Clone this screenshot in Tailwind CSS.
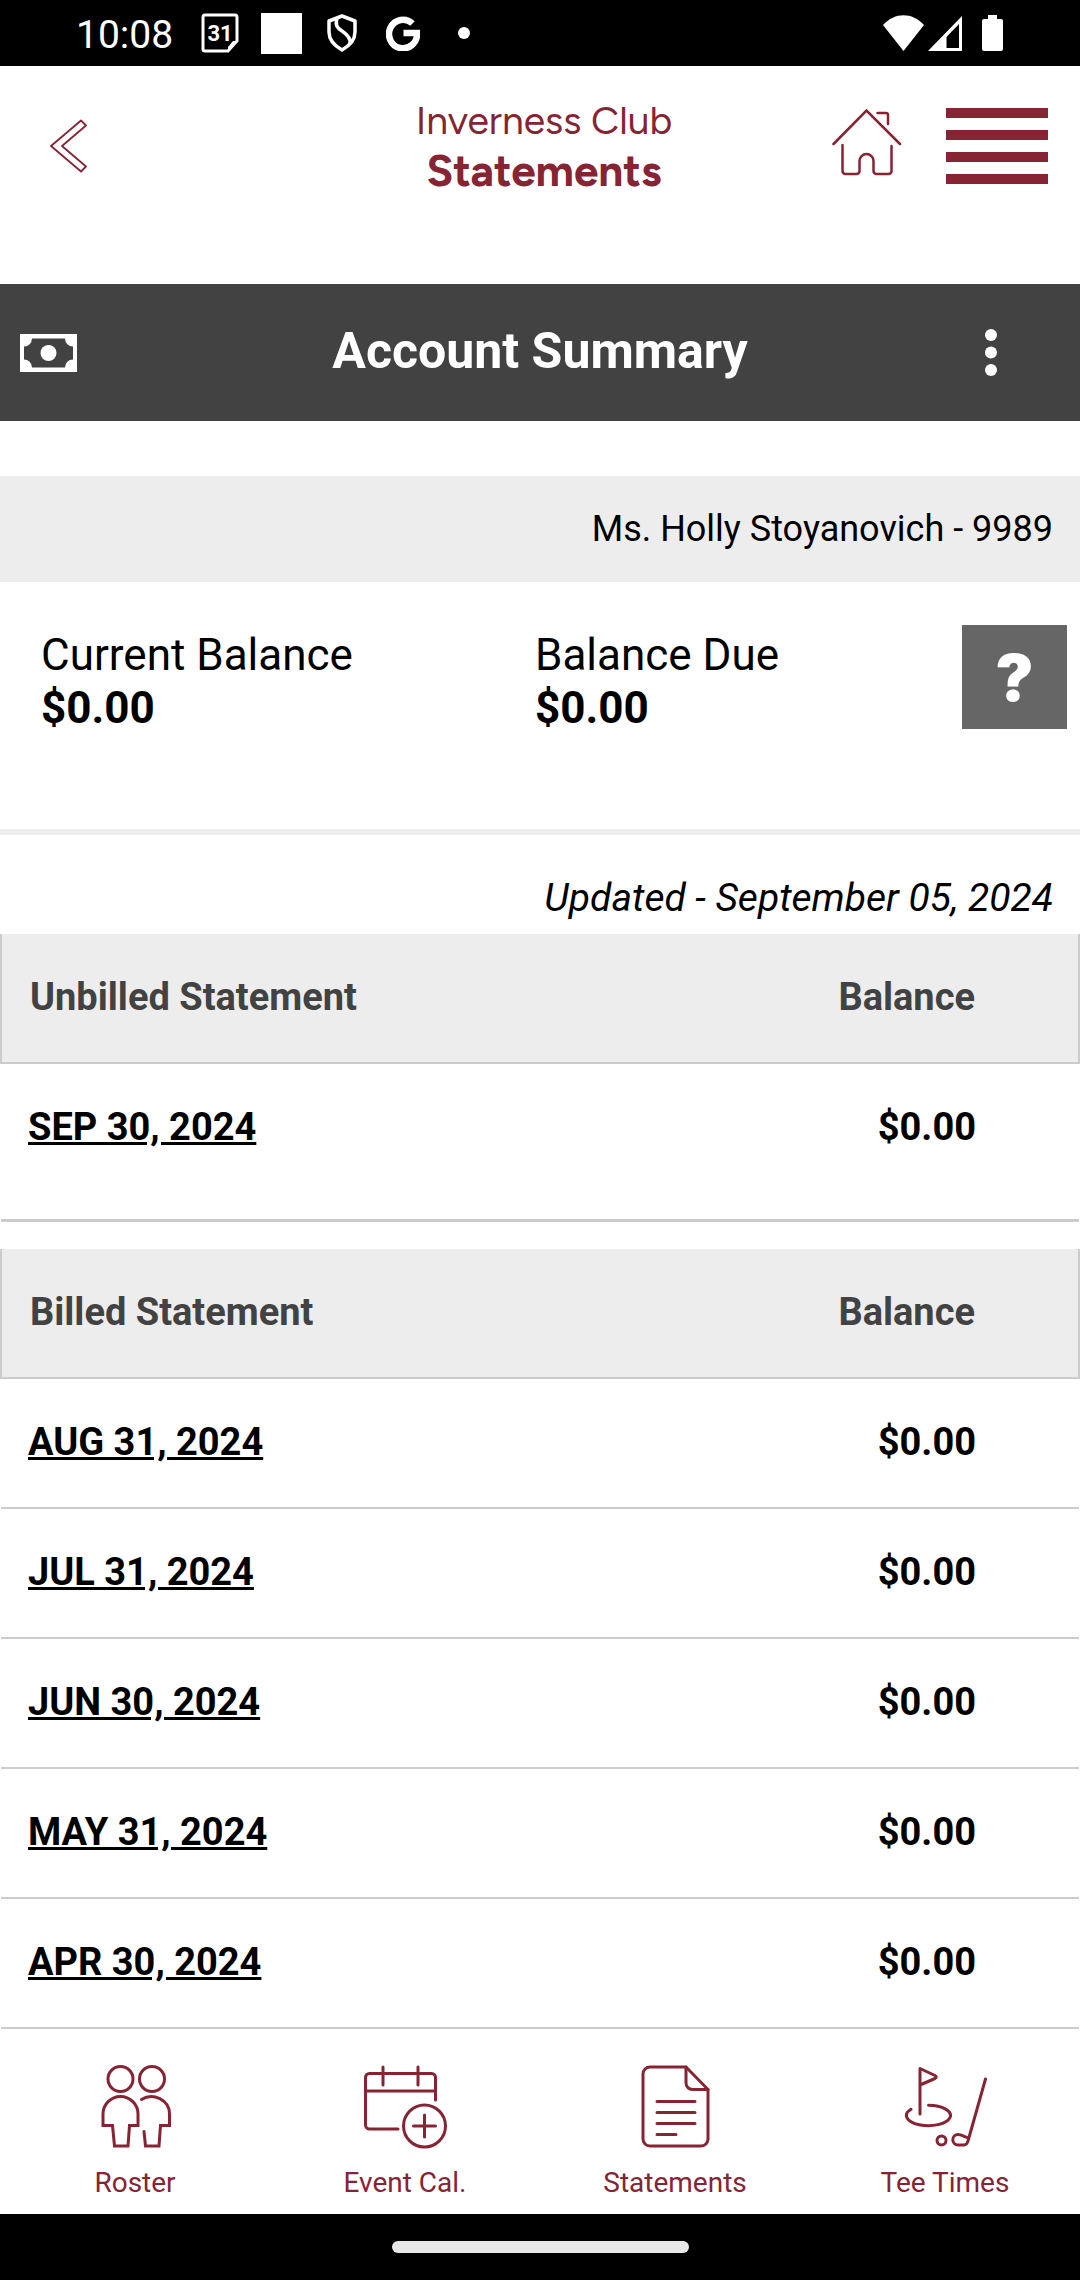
<!DOCTYPE html>
<html lang="en">
<head>
    <meta charset="UTF-8">
    <meta name="viewport" content="width=device-width, initial-scale=1.0">
    <title>Inverness Club - Statements</title>
    <script src="https://cdn.jsdelivr.net/npm/@tailwindcss/browser@4"></script>
</head>
<body class="min-h-screen flex flex-col bg-white text-black font-['Roboto',sans-serif]">

    <!-- Status bar -->
    <div class="h-[66px] bg-black text-white flex items-center justify-between pl-[76px] pr-[77px]">
        <div class="flex items-center">
            <span class="pt-1 text-[39px] leading-[48px]">10:08</span>
            <svg class="ml-7 w-[38px] h-[40px]" viewBox="0 0 38 40" fill="none" stroke="currentColor" stroke-width="3">
                <path d="M4 2h30a2 2 0 0 1 2 2v24l-9 10H4a2 2 0 0 1-2-2V4a2 2 0 0 1 2-2z"/>
                <path d="M36 28l-9 10v-4l5-6z" fill="currentColor" stroke="none"/>
                <text x="19" y="28" text-anchor="middle" font-family="Roboto, sans-serif" font-size="22" font-weight="700" fill="currentColor" stroke="none">31</text>
            </svg>
            <span class="ml-[22px] w-[41px] h-[41px] bg-white"></span>
            <svg class="ml-6 w-8 h-[38px]" viewBox="0 0 32 38" fill="none" stroke="currentColor" stroke-width="3.5" stroke-linejoin="round">
                <path d="M16 2l13 5v11c0 8-6 14-13 18C9 32 3 26 3 18V7z"/>
                <path d="M11 4c-2 7 0 10 5 13 6 4 9 8 8 13"/>
            </svg>
            <svg class="ml-7 w-[34px] h-[36px]" viewBox="0 0 34 36" fill="none" stroke="currentColor" stroke-width="6.5">
                <path d="M26.5 8.5A14 14.3 0 1 0 31 18H17.500"/>
            </svg>
            <span class="ml-[38px] w-3 h-3 rounded-full bg-white"></span>
        </div>
        <div class="flex items-center">
            <svg class="w-[41px] h-[36px]" viewBox="0 0 41 36" fill="currentColor"><path d="M20.500 36L0 10C12-3 29-3 41 10z"/></svg>
            <svg class="ml-1 w-[34px] h-[36px]" viewBox="0 0 34 36" fill="currentColor"><path fill-rule="evenodd" d="M34 1v35H0zM31 9L18.500 22v11H31z"/></svg>
            <svg class="ml-5 w-[21px] h-[36px]" viewBox="0 0 21 36" fill="currentColor"><path d="M6 0h9v4h4a2 2 0 0 1 2 2v28a2 2 0 0 1-2 2H2a2 2 0 0 1-2-2V6a2 2 0 0 1 2-2h4z"/></svg>
        </div>
    </div>

    <!-- Header -->
    <header class="grid grid-cols-[1fr_auto_1fr] items-center pt-[30px] pb-[88px] pl-10 pr-8 text-[#862434]">
        <button type="button" aria-label="Back" class="justify-self-start p-2.5">
            <svg class="w-[38px] h-[54px]" viewBox="0 0 38 54" fill="none" stroke="currentColor" stroke-width="1.8" stroke-linejoin="round"><path d="M31 1.500L1 27l30 25.500 5-5L12 27 36 6.500z"/></svg>
        </button>
        <h1 class="text-center leading-[50px] font-['Figtree','Lato',sans-serif]">
            <span class="block text-[39px]">Inverness Club</span>
            <span class="block text-[44px] font-bold">Statements</span>
        </h1>
        <div class="justify-self-end flex items-center gap-11">
            <a href="#home" aria-label="Home" class="pb-2">
                <svg class="w-[70px] h-[68px]" viewBox="0 0 70 68" fill="none" stroke="currentColor" stroke-width="2.500" stroke-linecap="round">
                    <path d="M1.500 36L34.500 2.500 68 36M45.500 5H54a2 2 0 0 1 2 2v9"/>
                    <path d="M10.500 37v26a3 3 0 0 0 3 3h11a3 3 0 0 0 3-3V53a7 7 0 0 1 14 0v10a3 3 0 0 0 3 3h12a3 3 0 0 0 3-3V38"/>
                </svg>
            </a>
            <button type="button" aria-label="Menu" class="w-[102px] flex flex-col gap-3">
                <span class="w-full h-2.5 bg-[#862434]"></span>
                <span class="w-full h-2.5 bg-[#862434]"></span>
                <span class="w-full h-2.5 bg-[#862434]"></span>
                <span class="w-full h-2.5 bg-[#862434]"></span>
            </button>
        </div>
    </header>

    <!-- Account bar -->
    <div class="grid grid-cols-[1fr_auto_1fr] items-center h-[137px] px-5 bg-[#424242] text-white">
        <svg class="w-[57px] h-[38px]" viewBox="0 0 57 38" fill="currentColor">
            <path fill-rule="evenodd" d="M0 0h57v38H0zM12 4.500a8 8 0 0 1-8 8v13a8 8 0 0 1 8 8h33a8 8 0 0 1 8-8v-13a8 8 0 0 1-8-8z"/>
            <circle cx="28.500" cy="19" r="8"/>
        </svg>
        <h2 class="pb-1 text-[50px] leading-[60px] font-bold">Account Summary</h2>
        <button type="button" aria-label="More options" class="justify-self-end mr-[63px]">
            <svg class="w-3 h-[47px]" viewBox="0 0 12 47" fill="currentColor"><circle cx="6" cy="6" r="6"/><circle cx="6" cy="23.500" r="6"/><circle cx="6" cy="41" r="6"/></svg>
        </button>
    </div>

    <main class="grow">
        <p class="mt-[55px] h-[106px] px-[27px] flex items-center justify-end bg-[#ededed] text-[36px]">Ms. Holly Stoyanovich - 9989</p>

        <!-- Balances -->
        <section class="flex items-start pt-[43px] pb-[94px] pl-[41px] pr-[13px] border-b-6 border-[#ededed] text-[44px] leading-[53px]">
            <dl class="grow grid grid-cols-[494px_1fr] pt-1">
                <div>
                    <dt>Current Balance</dt>
                    <dd class="font-bold">$0.00</dd>
                </div>
                <div>
                    <dt>Balance Due</dt>
                    <dd class="font-bold">$0.00</dd>
                </div>
            </dl>
            <button type="button" aria-label="Help" class="w-[105px] h-[104px] bg-[#666] text-white text-[64px] font-black font-['Inter',sans-serif]">?</button>
        </section>

        <p class="pt-[38px] pb-[11px] px-[27px] text-right text-[39px] leading-[50px] italic">Updated - September 05, 2024</p>

        <!-- Unbilled statements -->
        <table class="w-full text-[38px] leading-[46px] font-bold">
            <thead class="bg-[#ededed] text-[#424242] border-x-2 border-b-2 border-[#ccc]">
                <tr>
                    <th class="pt-10 pb-[42px] pl-7 text-left">Unbilled Statement</th>
                    <th class="pt-10 pb-[42px] pr-[103px] text-right">Balance</th>
                </tr>
            </thead>
            <tbody>
                <tr class="border-b-3 border-[#ccc]">
                    <td class="pt-10 pb-[69px] pl-[27px]"><a href="#sep-30-2024" class="underline">SEP 30, 2024</a></td>
                    <td class="pt-10 pb-[69px] pr-[103px] text-right">$0.00</td>
                </tr>
            </tbody>
        </table>

        <!-- Billed statements -->
        <table class="mt-[27px] w-full text-[38px] leading-[46px] font-bold">
            <thead class="bg-[#ededed] text-[#424242] border-x-2 border-b-2 border-[#ccc]">
                <tr>
                    <th class="pt-10 pb-[42px] pl-7 text-left">Billed Statement</th>
                    <th class="pt-10 pb-[42px] pr-[103px] text-right">Balance</th>
                </tr>
            </thead>
            <tbody>
                <tr class="border-b-2 border-[#ccc]">
                    <td class="pt-10 pb-[42px] pl-[27px]"><a href="#aug-31-2024" class="underline">AUG 31, 2024</a></td>
                    <td class="pt-10 pb-[42px] pr-[103px] text-right">$0.00</td>
                </tr>
                <tr class="border-b-2 border-[#ccc]">
                    <td class="pt-10 pb-[42px] pl-[27px]"><a href="#jul-31-2024" class="underline">JUL 31, 2024</a></td>
                    <td class="pt-10 pb-[42px] pr-[103px] text-right">$0.00</td>
                </tr>
                <tr class="border-b-2 border-[#ccc]">
                    <td class="pt-10 pb-[42px] pl-[27px]"><a href="#jun-30-2024" class="underline">JUN 30, 2024</a></td>
                    <td class="pt-10 pb-[42px] pr-[103px] text-right">$0.00</td>
                </tr>
                <tr class="border-b-2 border-[#ccc]">
                    <td class="pt-10 pb-[42px] pl-[27px]"><a href="#may-31-2024" class="underline">MAY 31, 2024</a></td>
                    <td class="pt-10 pb-[42px] pr-[103px] text-right">$0.00</td>
                </tr>
                <tr class="border-b-2 border-[#ccc]">
                    <td class="pt-10 pb-[42px] pl-[27px]"><a href="#apr-30-2024" class="underline">APR 30, 2024</a></td>
                    <td class="pt-10 pb-[42px] pr-[103px] text-right">$0.00</td>
                </tr>
            </tbody>
        </table>
    </main>

    <!-- Bottom navigation -->
    <nav class="grid grid-cols-4 pt-9 pb-[14px] text-[#862434] text-[28px] leading-[34px]">
        <a href="#roster" class="flex flex-col items-center gap-[17px]">
            <svg class="w-[84px] h-[84px]" viewBox="0 0 84 84" fill="none" stroke="currentColor" stroke-width="3" stroke-linecap="round">
                <circle cx="27.500" cy="14" r="12.500"/>
                <circle cx="59" cy="14" r="12.500"/>
                <path d="M10 60.500V49a17.500 17.500 0 0 1 35 0v11.500h-8.500L35 81H21.500l-2-20.500z"/>
                <path d="M48.500 34.500C60 27 76.500 35 76.500 49v11.500h-9L66 81H52.500L51 66.500"/>
            </svg>
            <span>Roster</span>
        </a>
        <a href="#events" class="flex flex-col items-center gap-[17px]">
            <svg class="w-[84px] h-[84px]" viewBox="0 0 84 84" fill="none" stroke="currentColor" stroke-width="3" stroke-linecap="round">
                <path d="M35 64H6.500a4 4 0 0 1-4-4V12.500a4 4 0 0 1 4-4h62a4 4 0 0 1 4 4V35M2.500 26h70M20 2v18M55 2v18"/>
                <circle cx="61.500" cy="61" r="21"/>
                <path d="M61.500 50v22M50.500 61h22"/>
            </svg>
            <span>Event Cal.</span>
        </a>
        <a href="#statements" class="flex flex-col items-center gap-[17px]">
            <svg class="w-[84px] h-[84px]" viewBox="0 0 84 84" fill="none" stroke="currentColor" stroke-width="3" stroke-linecap="round" stroke-linejoin="round">
                <path d="M53 2H17a7 7 0 0 0-7 7v65a7 7 0 0 0 7 7h51a7 7 0 0 0 7-7V24.500z"/>
                <path d="M53 2v16a6.500 6.500 0 0 0 6.500 6.500H75"/>
                <path d="M24 36.500h38M24 47.500h38M24 58.500h38M24 69.500h19"/>
            </svg>
            <span>Statements</span>
        </a>
        <a href="#tee-times" class="flex flex-col items-center gap-[17px]">
            <svg class="w-[84px] h-[84px]" viewBox="0 0 84 84" fill="none" stroke="currentColor" stroke-width="3" stroke-linecap="round" stroke-linejoin="round">
                <path d="M17 49V3.500l15 7q2.500 1.500 0 3L17 20"/>
                <path d="M25.500 40.300a22 10.200 0 1 1-17.500 4"/>
                <circle cx="38.500" cy="75.500" r="4.500"/>
                <path d="M82.500 14L65 76q-1 4-4 4h-6a5.200 5.200 0 0 1 0-10.400c4 0 5 2 9.500 3"/>
            </svg>
            <span>Tee Times</span>
        </a>
    </nav>

    <!-- Gesture bar -->
    <div class="h-[66px] bg-black flex items-center justify-center">
        <div class="w-[297px] h-3 rounded-full bg-[#e8e8e8]"></div>
    </div>

</body>
</html>
